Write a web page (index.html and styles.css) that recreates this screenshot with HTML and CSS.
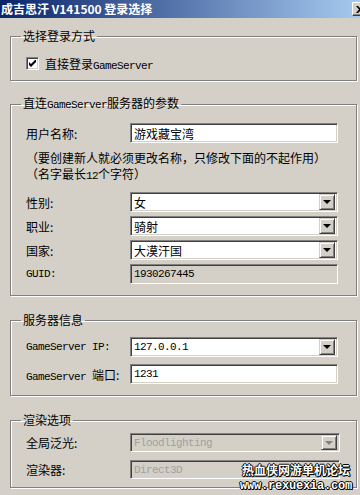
FILE: index.html
```html
<!doctype html>
<html lang="zh-CN">
  <head>
    <meta charset="UTF-8" />
    <title>成吉思汗 V141500 登录选择</title>
    <link rel="stylesheet" href="styles.css">
  </head>
  <body>
    <div class="window">
      <div class="titlebar">
        <span class="title">成吉思汗 V141500 登录选择</span>
        <span class="close">
          <svg width="8" height="7" viewBox="0 0 8 7"><path d="M0 0h2l2 2 2-2h2L5 3.5 8 7H6L4 5 2 7H0l3-3.5z" fill="#000"/></svg>
        </span>
      </div>

      <div class="content">
        <fieldset class="group g1">
          <legend>选择登录方式</legend>
          <label class="check">
            <span class="box">
              <svg width="7" height="7" viewBox="0 0 7 7"><path d="M0 2v3l2 2 5-5V-1L2 4z" fill="#000"/></svg>
            </span>
            <span>直接登录<span class="en">GameServer</span></span>
          </label>
        </fieldset>

        <fieldset class="group g2">
          <legend>直连<span class="en">GameServer</span>服务器的参数</legend>
          <div class="form">
            <span class="label">用户名称:</span>
            <div class="field">游戏藏宝湾</div>
          </div>
          <p class="note">（要创建新人就必须更改名称，只修改下面的不起作用）<br>（名字最长<span class="en">12</span>个字符）</p>
          <div class="form rows">
            <span class="label">性别:</span>
            <div class="field select">女<span class="drop"><i></i></span></div>
            <span class="label">职业:</span>
            <div class="field select">骑射<span class="drop"><i></i></span></div>
            <span class="label">国家:</span>
            <div class="field select">大漠汗国<span class="drop"><i></i></span></div>
            <span class="label en">GUID:</span>
            <div class="field readonly"><span class="en">1930267445</span></div>
          </div>
        </fieldset>

        <fieldset class="group g3">
          <legend>服务器信息</legend>
          <div class="form rows">
            <span class="label en">GameServer IP:</span>
            <div class="field select"><span class="en">127.0.0.1</span><span class="drop"><i></i></span></div>
            <span class="label"><span class="en">GameServer </span>端口:</span>
            <div class="field"><span class="en">1231</span></div>
          </div>
        </fieldset>

        <fieldset class="group g4">
          <legend>渲染选项</legend>
          <div class="form rows">
            <span class="label">全局泛光:</span>
            <div class="field select disabled"><span class="en">Floodlighting</span><span class="drop"><i></i></span></div>
            <span class="label">渲染器:</span>
            <div class="field disabled"><span class="en">Direct3D</span></div>
          </div>
        </fieldset>
      </div>

      <div class="watermark">
        <div class="wm-cn">热血侠网游单机论坛</div>
        <div class="wm-en">www.rexuexia.com</div>
      </div>
    </div>
  </body>
</html>
```

FILE: styles.css
```css
* {
  margin: 0;
  padding: 0;
  box-sizing: border-box;
}

body {
  width: 360px;
  height: 495px;
  overflow: hidden;
  background: #d4d0c8;
  font-family: "Noto Sans CJK SC", sans-serif;
  font-size: 12px;
  color: #000;
}

.window {
  position: relative;
  height: 495px;
}

.en {
  font-family: "Liberation Mono", monospace;
  font-size: 11px;
  letter-spacing: -0.6px;
}

/* title bar */

.titlebar {
  height: 18px;
  display: flex;
  align-items: center;
  background: linear-gradient(90deg, #0a246a 0%, #a6caf0 100%);
  padding-left: 1px;
}

.title {
  color: #fff;
  font-weight: 700;
  font-size: 12px;
  line-height: 14px;
  white-space: nowrap;
}

.close {
  margin-left: auto;
  margin-right: -8px;
  width: 16px;
  height: 14px;
  display: flex;
  align-items: center;
  justify-content: center;
  background: #d4d0c8;
  border: 1px solid;
  border-color: #fff #404040 #404040 #fff;
  box-shadow: inset -1px -1px 0 #808080;
}

/* group boxes */

.content {
  padding: 11px 3px 0 10px;
}

.group {
  border: 1px solid #808080;
  box-shadow: 1px 1px 0 #fff, inset 1px 1px 0 #fff;
  padding: 0 0 0 15px;
  min-width: 0;
}

.group legend {
  margin-left: -5px;
  padding: 0 2px;
  line-height: 14px;
}

.g1 {
  padding-top: 14px;
  padding-bottom: 10px;
}

.g2 { margin-top: 15px; padding-top: 11px; padding-bottom: 11px; }
.g3 { margin-top: 17px; padding-top: 10px; padding-bottom: 11px; }
.g4 { margin-top: 17px; padding-top: 6px; padding-bottom: 8px; }

.check {
  display: flex;
  align-items: center;
  gap: 6px;
  height: 13px;
}

.box {
  width: 13px;
  height: 13px;
  display: flex;
  align-items: center;
  justify-content: center;
  background: #fff;
  border: 1px solid;
  border-color: #808080 #fff #fff #808080;
  box-shadow: inset 1px 1px 0 #404040, inset -1px -1px 0 #d4d0c8;
}

/* form rows */

.form {
  display: grid;
  grid-template-columns: 104px 208px;
  align-items: center;
}

.rows { row-gap: 4px; }
.g3 .rows { row-gap: 7px; }
.g4 .rows { row-gap: 8px; grid-template-columns: 104px 210px; }

.label {
  white-space: nowrap;
}

.note {
  margin: 7px 0 8px;
  line-height: 16px;
  white-space: nowrap;
}

.field {
  height: 20px;
  display: flex;
  align-items: center;
  padding: 0 2px 0 3px;
  background: #fff;
  border: 1px solid;
  border-color: #808080 #fff #fff #808080;
  box-shadow: inset 1px 1px 0 #404040, inset -1px -1px 0 #d4d0c8;
  white-space: nowrap;
  overflow: hidden;
}

.g4 .field { height: 19px; }

.field.readonly,
.field.disabled {
  background: #d4d0c8;
}

.field.disabled {
  color: #a0a0a0;
}

.drop {
  margin-left: auto;
  width: 16px;
  height: 16px;
  flex: none;
  display: flex;
  align-items: center;
  justify-content: center;
  background: #d4d0c8;
  border: 1px solid;
  border-color: #d4d0c8 #404040 #404040 #d4d0c8;
  box-shadow: inset 1px 1px 0 #fff, inset -1px -1px 0 #808080;
}

.g4 .drop { height: 15px; }

.drop i {
  width: 0;
  height: 0;
  border-left: 4px solid transparent;
  border-right: 4px solid transparent;
  border-top: 4px solid #000;
}

.disabled .drop i {
  border-top-color: #808080;
}

/* watermark */

.watermark {
  position: absolute;
  right: 8px;
  bottom: 2px;
  text-align: center;
  color: #fff;
  text-shadow: 1px 0 0 #000, -1px 0 0 #000, 0 1px 0 #000, 0 -1px 0 #000, 1px 1px 0 #000;
}

.wm-cn {
  font-size: 12px;
  font-weight: 700;
  line-height: 18px;
}

.wm-en {
  font-family: "Liberation Mono", monospace;
  font-size: 12px;
  font-weight: 700;
  line-height: 14px;
  letter-spacing: -0.2px;
}
```
